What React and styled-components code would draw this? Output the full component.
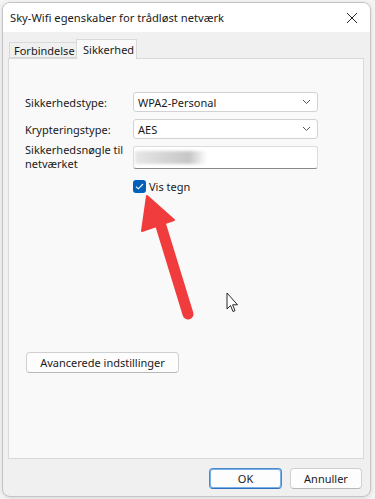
import styled, { createGlobalStyle } from "styled-components";

const Global = createGlobalStyle`
  html, body {
    margin: 0;
    padding: 0;
    background: #f4f4f4;
  }
  body {
    font-family: "Noto Sans", "Open Sans", sans-serif;
    font-size: 11px;
    color: #1a1a1a;
  }
`;

const Page = styled.div`
  position: relative;
  width: 375px;
  height: 499px;
  padding: 2px 0 0 2px;
  box-sizing: border-box;
`;

const Window = styled.div`
  width: 369px;
  height: 495px;
  box-sizing: border-box;
  border: 1px solid #c4c4c4;
  border-radius: 8px;
  overflow: hidden;
  display: flex;
  flex-direction: column;
  background: #f0f0f0;
  box-shadow: 0 1px 4px rgba(0, 0, 0, 0.12);
`;

const TitleBar = styled.div`
  height: 29px;
  background: #ffffff;
  display: flex;
  align-items: center;
  justify-content: space-between;
  padding: 0 8px 0 7px;
  font-size: 11.2px;
  flex-shrink: 0;
`;

const CloseIcon = styled.svg`
  width: 12px;
  height: 12px;
  margin-right: 4px;
`;

const Body = styled.div`
  flex: 1;
  display: flex;
  flex-direction: column;
  padding: 7px 6px 0 5px;
`;

const Tabs = styled.div`
  display: flex;
  align-items: flex-end;
  height: 19px;
  padding-left: 1px;
`;

const Tab = styled.div`
  box-sizing: border-box;
  height: ${(p) => (p.$active ? "20px" : "16px")};
  padding: ${(p) => (p.$active ? "0 8px 0 6px" : "0 4px 0 4px")};
  background: ${(p) => (p.$active ? "#f9f9f9" : "#f0f0f0")};
  border: 1px solid #d9d9d9;
  border-bottom: ${(p) => (p.$active ? "none" : "1px solid #d9d9d9")};
  margin-bottom: ${(p) => (p.$active ? "-1px" : "0")};
  position: relative;
  z-index: ${(p) => (p.$active ? 1 : 0)};
  display: flex;
  align-items: center;
  margin-left: ${(p) => (p.$active ? "-1px" : "0")};
  width: ${(p) => p.$w}px;
  white-space: nowrap;
`;

const Panel = styled.div`
  height: 401px;
  box-sizing: border-box;
  background: #f9f9f9;
  border: 1px solid #d9d9d9;
  padding: 33px 0 0 16px;
  display: flex;
  flex-direction: column;
`;

const Form = styled.div`
  display: grid;
  grid-template-columns: 108px 185px;
  row-gap: 7px;
  align-items: center;
`;

const Label = styled.div`
  line-height: ${(p) => (p.$top ? "14px" : "13px")};
  align-self: ${(p) => (p.$top ? "start" : "center")};
  margin-top: ${(p) => (p.$top ? "-3px" : "0")};
`;

const Select = styled.div`
  height: 20px;
  box-sizing: border-box;
  border: 1px solid #d2d2d2;
  border-radius: 3px;
  background: #ffffff;
  display: flex;
  align-items: center;
  justify-content: space-between;
  padding: 0 6px 0 4px;
`;

const KeyField = styled.div`
  height: 23px;
  box-sizing: border-box;
  border: 1px solid #dcdcdc;
  border-bottom: 1px solid #8a8a8a;
  border-radius: 3px;
  background: #ffffff;
  padding: 4px 0 4px 1px;
  display: flex;
  align-self: start;
`;

const Blur = styled.div`
  width: 72px;
  height: 13px;
  background: linear-gradient(90deg, #e6e6e6 0%, #cfcfcf 55%, #c6c6c6 75%, #ffffff 100%);
  filter: blur(1.5px);
`;

const CheckRow = styled.label`
  grid-column: 2;
  display: flex;
  align-items: center;
  gap: 3px;
  margin-top: 1px;
`;

const CheckBox = styled.span`
  width: 13px;
  height: 13px;
  border-radius: 3px;
  background: #005fb8;
  display: flex;
  align-items: center;
  justify-content: center;
`;

const Spacer = styled.div`
  height: 158px;
  flex-shrink: 0;
`;

const Button = styled.button`
  font: inherit;
  font-size: 11px;
  color: #1a1a1a;
  height: 21px;
  width: ${(p) => p.$w}px;
  box-sizing: border-box;
  background: #fdfdfd;
  border: 1px solid ${(p) => (p.$focus ? "#4a89d0" : "#d0d0d0")};
  border-bottom-color: ${(p) => (p.$focus ? "#2f6fbd" : "#b8b8b8")};
  border-radius: 4px;
  padding: 0;
  box-shadow: ${(p) => (p.$focus ? "inset 0 0 0 1px #7aaee6" : "none")};
`;

const AdvButton = styled(Button)`
  margin-left: 1px;
`;

const Footer = styled.div`
  display: flex;
  justify-content: flex-end;
  gap: 8px;
  padding: 9px 2px 0 0;
`;

const Overlay = styled.svg`
  position: absolute;
  left: 0;
  top: 0;
  width: 375px;
  height: 499px;
  pointer-events: none;
`;

const Chevron = () => (
  <svg width="9" height="6" viewBox="0 0 9 6">
    <path d="M1 1 L4.5 4.5 L8 1" fill="none" stroke="#555" strokeWidth="1" />
  </svg>
);

export default function App() {
  return (
    <Page>
      <Global />
      <Window>
        <TitleBar>
          <span>Sky-Wifi egenskaber for trådløst netværk</span>
          <CloseIcon viewBox="0 0 12 12">
            <path d="M1 1 L11 11 M11 1 L1 11" stroke="#222" strokeWidth="1" />
          </CloseIcon>
        </TitleBar>
        <Body>
          <Tabs>
            <Tab $w={68}>Forbindelse</Tab>
            <Tab $w={61} $active>
              Sikkerhed
            </Tab>
          </Tabs>
          <Panel>
            <Form>
              <Label>Sikkerhedstype:</Label>
              <Select>
                <span>WPA2-Personal</span>
                <Chevron />
              </Select>
              <Label>Krypteringstype:</Label>
              <Select>
                <span>AES</span>
                <Chevron />
              </Select>
              <Label $top>
                Sikkerhedsnøgle til
                <br />
                netværket
              </Label>
              <KeyField>
                <Blur />
              </KeyField>
              <CheckRow>
                <CheckBox>
                  <svg width="9" height="7" viewBox="0 0 9 7">
                    <path d="M1 3.6 L3.3 5.8 L8 1" fill="none" stroke="#fff" strokeWidth="1.1" />
                  </svg>
                </CheckBox>
                Vis tegn
              </CheckRow>
            </Form>
            <Spacer />
            <AdvButton $w={153}>Avancerede indstillinger</AdvButton>
          </Panel>
          <Footer>
            <Button $w={73} $focus>
              OK
            </Button>
            <Button $w={72}>Annuller</Button>
          </Footer>
        </Body>
      </Window>
      <Overlay viewBox="0 0 375 499">
        <line x1="161" y1="226" x2="188" y2="314" stroke="#f03c3c" strokeWidth="11" strokeLinecap="round" />
        <polygon points="147,196 142,231 174,220" fill="#f03c3c" stroke="#f03c3c" strokeWidth="2" strokeLinejoin="round" />
        <path
          d="M227 293 L227 309 L230.5 305.5 L233 311.5 L235 310.6 L232.6 304.8 L237.5 304.8 Z"
          fill="#fff"
          stroke="#111"
          strokeWidth="0.9"
          strokeLinejoin="round"
        />
      </Overlay>
    </Page>
  );
}
